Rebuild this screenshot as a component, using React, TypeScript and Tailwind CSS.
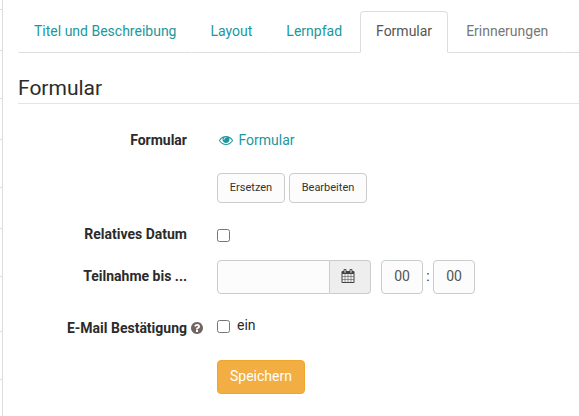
import React from "react";

const railRows = [
  "h-[10px]", "h-[41px]", "h-[48px]", "h-[41px]", "h-[48px]",
  "h-[41px]", "h-[48px]", "h-[55px]", "h-[48px]",
];

const tabs = [
  { label: "Titel und Beschreibung", style: "border-transparent border-b-[#ddd] text-[#20979e]" },
  { label: "Layout", style: "border-transparent border-b-[#ddd] text-[#20979e]" },
  { label: "Lernpfad", style: "border-transparent border-b-[#ddd] text-[#20979e]" },
  { label: "Formular", style: "border-[#ddd] border-b-white text-[#555]" },
  { label: "Erinnerungen", style: "border-transparent border-b-[#ddd] text-[#777]" },
];

function Icon({ d, className }: { d: string; className: string }) {
  return (
    <svg viewBox="0 0 1792 1792" fill="currentColor" className={className} aria-hidden="true">
      <path d={d} />
    </svg>
  );
}

const EYE =
  "M1664 960q-152-236-381-353 61 104 61 225 0 185-131.5 316.5t-316.5 131.5-316.5-131.5-131.5-316.5q0-121 61-225-229 117-381 353 133 205 333.5 326.5t434.5 121.5 434.5-121.5 333.5-326.5zm-720-384q0-20-14-34t-34-14q-125 0-214.5 89.5t-89.5 214.5q0 20 14 34t34 14 34-14 14-34q0-86 61-147t147-61q20 0 34-14t14-34zm848 384q0 34-20 69-140 230-376.5 368.5t-499.5 138.5-499.5-139-376.5-368q-20-35-20-69t20-69q140-229 376.5-368t499.5-139 499.5 139 376.5 368q20 35 20 69z";
const CALENDAR =
  "M192 1664h288v-288h-288v288zm352 0h320v-288h-320v288zm-352-352h288v-320h-288v320zm352 0h320v-320h-320v320zm-352-384h288v-288h-288v288zm736 736h320v-288h-320v288zm-384-736h320v-288h-320v288zm768 736h288v-288h-288v288zm-384-352h320v-320h-320v320zm-352-864v-288q0-13-9.5-22.5t-22.5-9.5h-64q-13 0-22.5 9.5t-9.5 22.5v288q0 13 9.5 22.5t22.5 9.5h64q13 0 22.5-9.5t9.5-22.5zm736 864h288v-320h-288v320zm-384-384h320v-288h-320v288zm384 0h288v-288h-288v288zm32-480v-288q0-13-9.5-22.5t-22.5-9.5h-64q-13 0-22.5 9.5t-9.5 22.5v288q0 13 9.5 22.5t22.5 9.5h64q13 0 22.5-9.5t9.5-22.5zm384-64v1280q0 52-38 90t-90 38h-1408q-52 0-90-38t-38-90v-1280q0-52 38-90t90-38h128v-96q0-66 47-113t113-47h64q66 0 113 47t47 113v96h384v-96q0-66 47-113t113-47h64q66 0 113 47t47 113v96h128q52 0 90 38t38 90z";
const QUESTION =
  "M1024 1376v-192q0-14-9-23t-23-9h-192q-14 0-23 9t-9 23v192q0 14 9 23t23 9h192q14 0 23-9t9-23zm256-672q0-88-55.5-163t-138.5-116-170-41q-243 0-371 213-15 24 8 42l132 100q7 6 19 6 16 0 25-12 53-68 86-92 34-24 86-24 48 0 85.5 26t37.5 59q0 38-20 61t-68 45q-63 28-115.5 86.5t-52.5 125.5v36q0 14 9 23t23 9h192q14 0 23-9t9-23q0-19 21.5-49.5t54.5-49.5q32-18 49-28.5t46-35 44.5-48 28-60.5 12.5-81zm384 192q0 209-103 385.5t-279.5 279.5-385.5 103-385.5-103-279.5-279.5-103-385.5 103-385.5 279.5-279.5 385.5-103 385.5 103 279.5 279.5 103 385.5z";

function Label({ children }: { children?: React.ReactNode }) {
  return <div className="w-[169px] shrink-0 text-right font-bold whitespace-nowrap">{children}</div>;
}

function Checkbox() {
  return (
    <input
      type="checkbox"
      className="block size-[13px] appearance-none rounded-[2.5px] border border-[#767676] bg-white"
    />
  );
}

const smallButton =
  "h-[30px] rounded-[4px] border border-[#ccc] bg-[#fcfcfc] pb-[2px] text-[11px] leading-none text-[#333] whitespace-nowrap";
const timeField =
  "h-[34px] w-[42px] rounded-[4px] border border-[#ccc] bg-[#fcfcfc] pb-[2px] text-center text-sm text-[#555]";

export default function App() {
  return (
    <div className="flex h-[416px] w-[579px] overflow-hidden bg-white font-['Roboto',sans-serif] text-sm leading-5 text-[#2b2b2b]">
      <aside className="w-[3px] shrink-0 border-r border-[#ddd]">
        {railRows.map((height, i) => (
          <div key={i} className={`border-b border-[#ddd] ${height}`} />
        ))}
      </aside>
      <main className="ml-[15px] w-[561px] shrink-0">
        <nav className="mt-[11px] flex h-[42px]">
          {tabs.map((tab) => (
            <React.Fragment key={tab.label}>
              <a className={`rounded-t-[4px] border px-[15px] pt-[9px] whitespace-nowrap ${tab.style}`}>{tab.label}</a>
              <span className="w-[2px] shrink-0 border-b border-[#ddd]" />
            </React.Fragment>
          ))}
          <span className="grow border-b border-[#ddd]" />
        </nav>
        <h1 className="mt-[20px] h-[31px] border-b border-[#e5e5e5] text-[21px] leading-[30px]">Formular</h1>

        <div className="mt-[26px] flex gap-[30px]">
          <Label>Formular</Label>
          <a className="flex items-center gap-[5.5px] pl-[2px] text-[#20979e]">
            <Icon d={EYE} className="size-[14px]" />
            Formular
          </a>
        </div>

        <div className="mt-[23px] flex gap-[4px] pl-[199px]">
          <button className={`w-[68px] ${smallButton}`}>Ersetzen</button>
          <button className={`w-[78px] ${smallButton}`}>Bearbeiten</button>
        </div>

        <div className="mt-[21px] flex gap-[30px]">
          <Label>Relatives Datum</Label>
          <div className="pt-[5px]"><Checkbox /></div>
        </div>

        <div className="mt-[16px] flex gap-[30px]">
          <div className="pt-[6px]"><Label>Teilnahme bis ...</Label></div>
          <div className="flex items-center">
            <input className="h-[34px] w-[113px] rounded-l-[4px] border border-[#ccc] bg-[#fcfcfc] px-3" />
            <button className="flex h-[34px] w-[41px] items-center justify-center rounded-r-[4px] border border-l-0 border-[#ccc] bg-[#eee] text-[#444]">
              <Icon d={CALENDAR} className="mr-[5px] mb-[2px] size-[14px]" />
            </button>
            <input className={`ml-[10px] ${timeField}`} defaultValue="00" />
            <span className="-mt-[2px] w-[10px] text-center">:</span>
            <input className={timeField} defaultValue="00" />
          </div>
        </div>

        <div className="mt-[24px] flex">
          <Label>E-Mail Bestätigung</Label>
          <Icon d={QUESTION} className="mt-[3px] ml-[3px] size-[14px] text-[#73655f]" />
          <div className="ml-[13px] pt-[2px]"><Checkbox /></div>
          <span className="-mt-[3px] ml-[7px]">ein</span>
        </div>

        <div className="mt-[22px] pl-[199px]">
          <button className="h-[34px] w-[88px] rounded-[4px] border border-[#f0a62d] bg-[#f2ae43] pb-[2px] text-white">Speichern</button>
        </div>
      </main>
    </div>
  );
}
